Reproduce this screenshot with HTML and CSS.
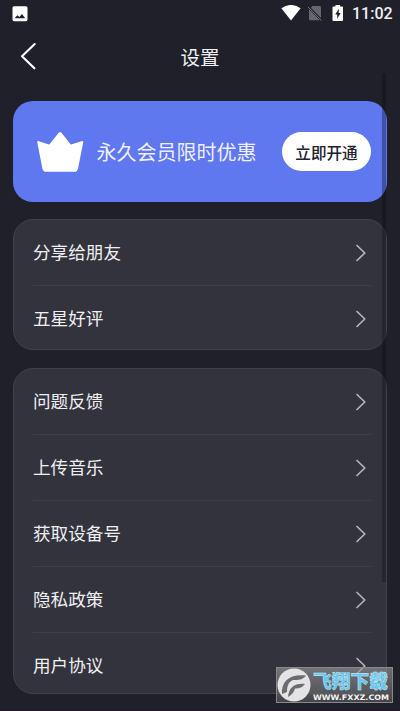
FILE: index.html
```html
<!DOCTYPE html>
<html lang="zh-CN">
<head>
<meta charset="utf-8">
<title>设置</title>
<link rel="stylesheet" href="styles.css">
</head>
<body>
<svg class="defs" width="0" height="0"><symbol id="chev" viewBox="0 0 12 18"><path d="M2 1.5 9.8 9 2 16.5" fill="none" stroke="#b4b4bd" stroke-width="1.7" stroke-linecap="round" stroke-linejoin="round"/></symbol></svg>
<div class="screen">
  <div class="status">
    <svg class="photo" width="16" height="16" viewBox="0 0 16 16"><rect x=".5" y=".2" width="15" height="15" rx="1.6" fill="#fff"/><path d="M2.6 12.2 5.4 9.2 7.4 11 10 8 13.2 12.2Z" fill="#20202a"/></svg>
    <svg class="wifi" width="20" height="16" viewBox="0 0 20 16"><path d="M.4 3.3Q10-3.4 19.6 3.3L10 15.6Z" fill="#fff"/></svg>
    <svg class="sim" width="16" height="17" viewBox="0 0 16 17"><path d="M5.6 1H12.6Q14 1 14 2.4V13L3.8 2.8ZM2 4.2 12.8 15.2H3.3Q2 15.2 2 14Z" fill="#66666e"/><path d="M1 2 14.5 15.6" stroke="#74747c" stroke-width="1"/></svg>
    <svg class="battery" width="12" height="18" viewBox="0 0 12 18"><path d="M3.5 1H8V2.5H10Q11 2.5 11 3.6V16Q11 17 10 17H1.5Q.5 17 .5 16V3.6Q.5 2.5 1.5 2.5H3.5Z" fill="#fff"/><path d="M7 4.8 3.2 10.5H5.2V14.8L8.6 9H6.6Z" fill="#20202a"/></svg>
    <span class="time">11:02</span>
  </div>
  <header class="header">
    <svg class="back" width="18" height="28" viewBox="0 0 18 28"><path d="M14.7 2 2 14.2 14.4 26.3" fill="none" stroke="#fff" stroke-width="2.1" stroke-linecap="round" stroke-linejoin="round"/></svg>
    <h1>设置</h1>
  </header>
  <main>
    <section class="promo">
      <svg class="crown" width="48" height="42" viewBox="0 0 48 42"><path d="M2 10.8 13.5 14.6 23.6 2 24.7 2 34.5 14.6 46.5 10.8 41.2 37.5Q40.6 40 38.5 40H10Q7.8 40 7.2 37.5Z" fill="#fff" stroke="#fff" stroke-width="1.6" stroke-linejoin="round"/></svg>
      <span class="promo-text">永久会员限时优惠</span>
      <button class="open">立即开通</button>
    </section>
    <section class="card">
      <div class="row"><span>分享给朋友</span><svg width="12" height="18"><use href="#chev"/></svg></div>
      <div class="row"><span>五星好评</span><svg width="12" height="18"><use href="#chev"/></svg></div>
    </section>
    <section class="card second">
      <div class="row"><span>问题反馈</span><svg width="12" height="18"><use href="#chev"/></svg></div>
      <div class="row"><span>上传音乐</span><svg width="12" height="18"><use href="#chev"/></svg></div>
      <div class="row"><span>获取设备号</span><svg width="12" height="18"><use href="#chev"/></svg></div>
      <div class="row"><span>隐私政策</span><svg width="12" height="18"><use href="#chev"/></svg></div>
      <div class="row"><span>用户协议</span><svg width="12" height="18"><use href="#chev"/></svg></div>
    </section>
  </main>
  <div class="scrollbar"></div>
  <div class="watermark">
    <svg width="36" height="36" viewBox="0 0 36 36"><circle cx="18" cy="18" r="16.5" fill="#e4e4e4"/><path d="M6 27C5 14 14 6.500 30 8.500C27 13 22 13 17 13C12 15 11 20 11 25ZM12 30C13 20 19 16 29 17C26 21 22 21.500 19 21.500C18 25 16 28 12 30Z" fill="#6c6c70"/></svg>
    <div class="mark"><svg class="name" width="78" height="22" viewBox="0 0 78 22"><text x="0" y="17.2" textLength="75" lengthAdjust="spacingAndGlyphs">飞翔下载</text></svg><svg class="site" width="78" height="10" viewBox="0 0 78 10"><text x="0" y="7.2" textLength="76" lengthAdjust="spacingAndGlyphs">WWW.FXXZ.COM</text></svg></div>
  </div>
</div>
</body>
</html>
```

FILE: styles.css
```css
* { box-sizing: border-box; }
body { margin: 0; background: #20202a; color: #f0f0f3; font-family: "Noto Sans CJK SC", sans-serif; }
.defs { position: absolute; }
.screen { position: relative; width: 400px; height: 711px; overflow: hidden; border-bottom: 1px solid #21142b; }
.status { height: 28px; display: flex; align-items: flex-start; padding: 5px 9px 0 12px; }
.status svg { flex: none; }
.photo { margin-top: 1px; }
.wifi { margin-left: auto; }
.sim { margin-left: 6px; }
.battery { margin: -1px 0 0 9px; }
.time { margin-left: 8px; font: 500 16px/18px Roboto, sans-serif; width: 39px; white-space: nowrap; }
.header { height: 61px; display: grid; grid-template-columns: 60px 1fr 60px; align-items: center; }
.back { margin: -5px 0 0 20px; }
h1 { margin: -4px 0 0; text-align: center; font-size: 19.5px; line-height: 28px; font-weight: 400; }
main { padding: 12px 13.5px 0 13px; }
.promo { height: 101px; border-radius: 20px; background: #5f77ef; display: flex; align-items: center; padding: 0 15.5px 0 23px; }
.crown { flex: none; }
.promo-text { margin-left: 12.5px; font-size: 20px; line-height: 28px; white-space: nowrap; color: #eef0ff; }
.open { margin-left: auto; width: 89px; height: 39px; padding: 0; border: 0; border-radius: 20px; background: #fff; color: #20202a; font: 500 15.6px/24px "Noto Sans CJK SC", sans-serif; }
.card { margin-top: 17px; height: 131px; border: 1px solid #41414a; border-radius: 20px; background: #33333d; padding: 0 15px 0 19px; }
.second { margin-top: 18px; height: 326px; }
.row { height: 66px; display: flex; align-items: center; justify-content: space-between; padding-right: 4px; font-size: 17.6px; line-height: 26px; border-bottom: 1px solid #3e3e48; }
.row span { margin-bottom: 2px; }
.row:last-child { border-bottom-color: transparent; }
.scrollbar { position: absolute; left: 382px; top: 73px; width: 4px; height: 509px; background: rgba(12, 12, 16, .34); }
.watermark { position: absolute; left: 276px; top: 667px; width: 117px; height: 36px; display: flex; background: linear-gradient(rgba(155, 155, 158, .62), rgba(90, 90, 94, .62)); border: 1px solid #88888b; }
.watermark > svg { flex: none; margin: -1px 0 0 -1px; }
.mark { display: flex; flex-direction: column; padding-top: 3px; margin-left: 1px; }
.mark svg { display: block; overflow: visible; }
.name text { font: 900 18.5px "Noto Sans CJK SC", sans-serif; fill: #64c8f0; stroke: #d8f2fa; stroke-width: .4px; }
.site text { font: 700 7.5px "DejaVu Sans", sans-serif; fill: #f5f5f5; }
```
